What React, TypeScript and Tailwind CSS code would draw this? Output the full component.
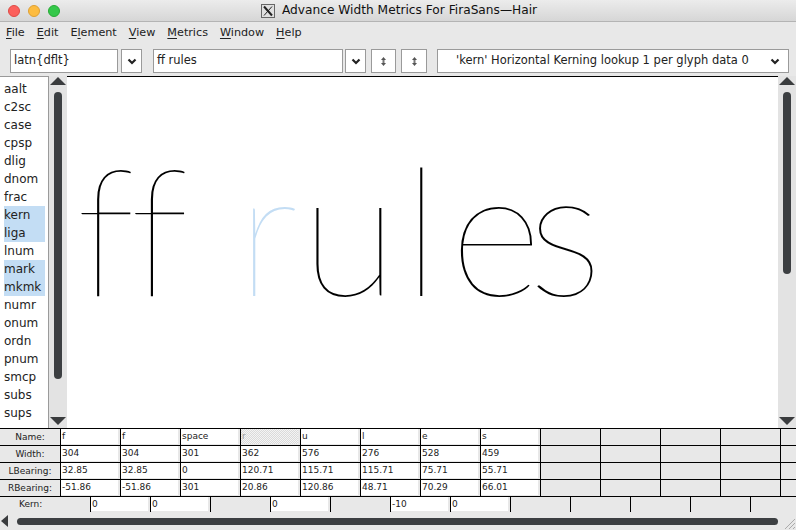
import React from "react";

const UpArrow = () => (
  <svg width="16" height="9" viewBox="0 0 16 9" className="block">
    <polygon points="8,0 16,8 0,8" fill="#3a3c3e" />
  </svg>
);
const DownArrow = () => (
  <svg width="16" height="9" viewBox="0 0 16 9" className="block">
    <polygon points="0,0 16,0 8,8" fill="#3a3c3e" />
  </svg>
);

const Chevron = () => (
  <svg width="10" height="7" viewBox="0 0 10 7">
    <polyline points="1.5,1.5 5,5 8.5,1.5" fill="none" stroke="#222" strokeWidth="2.2" />
  </svg>
);

const Spin = () => (
  <svg width="5" height="9" viewBox="0 0 5 9">
    <polygon points="2.5,0 5,3 0,3" fill="#555" />
    <rect x="1.5" y="3" width="2" height="3" fill="#777" />
    <polygon points="0,6 5,6 2.5,9" fill="#555" />
  </svg>
);

const VScroll = ({ thumbTop, thumbH }: { thumbTop: number; thumbH: number }) => (
  <div className="w-[18px] h-full bg-[#e3e3e3] flex flex-col items-center">
    <div className="mt-[1px]">
      <UpArrow />
    </div>
    <div className="flex-1 w-full flex flex-col items-center">
      <div style={{ marginTop: thumbTop, height: thumbH }} className="w-[8px] rounded-full bg-[#3c3f42]" />
    </div>
    <div className="mb-[2px]">
      <DownArrow />
    </div>
  </div>
);

const features = [
  "aalt", "c2sc", "case", "cpsp", "dlig", "dnom", "frac", "kern", "liga", "lnum",
  "mark", "mkmk", "numr", "onum", "ordn", "pnum", "smcp", "subs", "sups",
];
const selected = new Set(["kern", "liga", "mark", "mkmk"]);

const menus: [string, number][] = [
  ["File", 0],
  ["Edit", 0],
  ["Element", 1],
  ["View", 0],
  ["Metrics", 0],
  ["Window", 0],
  ["Help", 0],
];

const names = ["f", "f", "space", "r", "u", "l", "e", "s"];
const widths = ["304", "304", "301", "362", "576", "276", "528", "459"];
const lb = ["32.85", "32.85", "0", "120.71", "115.71", "115.71", "75.71", "55.71"];
const rb = ["-51.86", "-51.86", "301", "20.86", "120.86", "48.71", "70.29", "66.01"];
const kerns = ["0", "0", "", "0", "", "-10", "0", "", "", "", "", ""];

const S = 0.177;
const glyphs: { ch: string; adv: number; blue?: boolean; tight?: boolean }[] = [
  { ch: "f", adv: 304, tight: true },
  { ch: "f", adv: 304, tight: true },
  { ch: "\u00a0", adv: 301 },
  { ch: "r", adv: 362, blue: true },
  { ch: "u", adv: 576 },
  { ch: "l", adv: 276 - 10 },
  { ch: "e", adv: 440, tight: true },
  { ch: "s", adv: 459 },
];

const DataRow = ({ label, vals }: { label: string; vals: string[] }) => (
  <div className="flex h-[17px] border-b border-black">
    <div className="w-[60px] shrink-0 text-center leading-[16px] text-[9px] text-[#222]">{label}</div>
    {Array.from({ length: 13 }).map((_, i) => {
      const v = vals[i];
      const has = i < vals.length;
      const isR = label === "Name:" && i === 3;
      return (
        <div key={i} className={`${i === 12 ? "w-[16px]" : "w-[60px]"} shrink-0 border-l border-black h-full`}>
          {has ? (
            <div
              className={`h-[15px] w-[57px] pl-[1px] leading-[15px] text-[9px] ${
                isR
                  ? "bg-[repeating-conic-gradient(#dadada_0_25%,#f4f4f4_0_50%)] bg-[length:2px_2px] text-[#9a9a9a]"
                  : "bg-white text-[#222]"
              }`}
            >
              {v}
            </div>
          ) : null}
        </div>
      );
    })}
  </div>
);

export default function App() {
  return (
    <div className="w-[796px] h-[530px] overflow-hidden bg-[#e8e8e8] flex flex-col font-['DejaVu_Sans',sans-serif] text-[#111]">
      {/* Title bar */}
      <div className="h-[22px] shrink-0 flex items-center bg-gradient-to-b from-[#ececec] to-[#d6d6d6] border-b border-[#b4b4b4]">
        <div className="flex gap-[8px] pl-[8px]">
          <div className="w-[12px] h-[12px] rounded-full bg-[#fc605c] border border-[#de4a45]" />
          <div className="w-[12px] h-[12px] rounded-full bg-[#fdbc40] border border-[#dea033]" />
          <div className="w-[12px] h-[12px] rounded-full bg-[#34c84a] border border-[#27aa35]" />
        </div>
        <div className="flex items-center ml-[201px]">
          <svg width="14" height="14" viewBox="0 0 14 14">
            <rect x="0.5" y="0.5" width="13" height="13" fill="#e0e0e0" stroke="#666" />
            <line x1="3" y1="2.5" x2="11" y2="11.5" stroke="#222" strokeWidth="2" />
            <line x1="11" y1="2.5" x2="3" y2="11.5" stroke="#222" strokeWidth="1" />
          </svg>
          <span className="ml-[7px] text-[12.2px] text-[#111] leading-none">Advance Width Metrics For FiraSans—Hair</span>
        </div>
      </div>

      {/* Menu bar */}
      <div className="h-[23px] shrink-0 flex items-center pl-[6px] gap-[12px] text-[11.2px] text-[#222]">
        {menus.map(([m, idx]) => (
          <span key={m}>
            {m.slice(0, idx)}
            <span className="underline underline-offset-[2px]">{m[idx]}</span>
            {m.slice(idx + 1)}
          </span>
        ))}
      </div>

      {/* Toolbar */}
      <div className="h-[31px] shrink-0 flex items-start pt-[4px] text-[11.5px] text-[#222]">
        <div className="ml-[10px] w-[108px] h-[24px] bg-white border border-[#9a9a9a] flex items-center pl-[3px]">latn{"{"}dflt{"}"}</div>
        <div className="ml-[3px] w-[21px] h-[24px] bg-white border border-[#9a9a9a] flex items-center justify-center">
          <Chevron />
        </div>
        <div className="ml-[11px] w-[190px] h-[24px] bg-white border border-[#9a9a9a] flex items-center pl-[3px]">ff rules</div>
        <div className="ml-[2px] w-[21px] h-[24px] bg-white border border-[#9a9a9a] flex items-center justify-center">
          <Chevron />
        </div>
        <div className="ml-[5px] w-[25px] h-[24px] bg-white border border-[#9a9a9a] flex items-center justify-center">
          <Spin />
        </div>
        <div className="ml-[5px] w-[26px] h-[24px] bg-white border border-[#9a9a9a] flex items-center justify-center">
          <Spin />
        </div>
        <div className="ml-[10px] w-[352px] h-[24px] bg-white border border-[#9a9a9a] flex items-center pl-[18px] pr-[8px]">
          <span className="flex-1">'kern' Horizontal Kerning lookup 1 per glyph data 0</span>
          <Chevron />
        </div>
      </div>

      {/* Main */}
      <div className="h-[352px] shrink-0 flex">
        <div className="w-[49px] h-full bg-white border-t border-r border-[#9a9a9a] pt-[3px] pl-[4px] text-[12px] text-[#222]">
          {features.map((f) => (
            <div key={f} className={`h-[18px] leading-[18px] w-[41px] ${selected.has(f) ? "bg-[#c3ddf4]" : ""}`}>
              {f}
            </div>
          ))}
        </div>
        <VScroll thumbTop={6} thumbH={287} />
        <div className="flex-1 h-full bg-white border-t border-black overflow-hidden">
          <div className="mt-[60px] pl-[9px] flex h-[180px] leading-[180px] text-[178px] font-['Lato',sans-serif] font-[100] text-black whitespace-nowrap">
            {glyphs.map((g, i) => (
              <span
                key={i}
                className={`shrink-0 inline-block ${g.blue ? "text-[#c3ddf4]" : ""} ${g.tight ? "tracking-[-18px]" : ""}`}
                style={{ width: g.adv * S }}
              >
                {g.ch}
              </span>
            ))}
          </div>
        </div>
        <VScroll thumbTop={6} thumbH={182} />
      </div>

      {/* Table */}
      <div className="h-[84px] shrink-0 border-t border-black flex flex-col">
        <DataRow label="Name:" vals={names} />
        <DataRow label="Width:" vals={widths} />
        <DataRow label="LBearing:" vals={lb} />
        <DataRow label="RBearing:" vals={rb} />
        <div className="flex h-[15px]">
          <div className="w-[90px] shrink-0 pl-[19px] leading-[15px] text-[9px] text-[#222]">Kern:</div>
          {kerns.map((k, i) => (
            <div key={i} className={`${i === 11 ? "w-[46px]" : "w-[60px]"} shrink-0 border-l border-black h-full`}>
              {k !== "" ? (
                <div className="h-[14px] w-[57px] bg-white pl-[1px] leading-[14px] text-[9px] text-[#222]">{k}</div>
              ) : null}
            </div>
          ))}
        </div>
      </div>

      {/* Bottom scrollbar */}
      <div className="h-[18px] shrink-0 flex items-center">
        <svg width="8" height="12" viewBox="0 0 8 12" className="ml-[1px]">
          <polygon points="0,6 7,0 7,12" fill="#3a3c3e" />
        </svg>
        <div className="ml-[8px] w-[762px] h-[7px] rounded-full bg-[#3c3f42]" />
        <svg width="14" height="14" viewBox="0 0 14 14" className="ml-[4px] mt-[4px]">
          <line x1="13" y1="3" x2="3" y2="13" stroke="#aaa" strokeWidth="1" />
          <line x1="13" y1="7" x2="7" y2="13" stroke="#aaa" strokeWidth="1" />
          <line x1="13" y1="11" x2="11" y2="13" stroke="#aaa" strokeWidth="1" />
        </svg>
      </div>
    </div>
  );
}
